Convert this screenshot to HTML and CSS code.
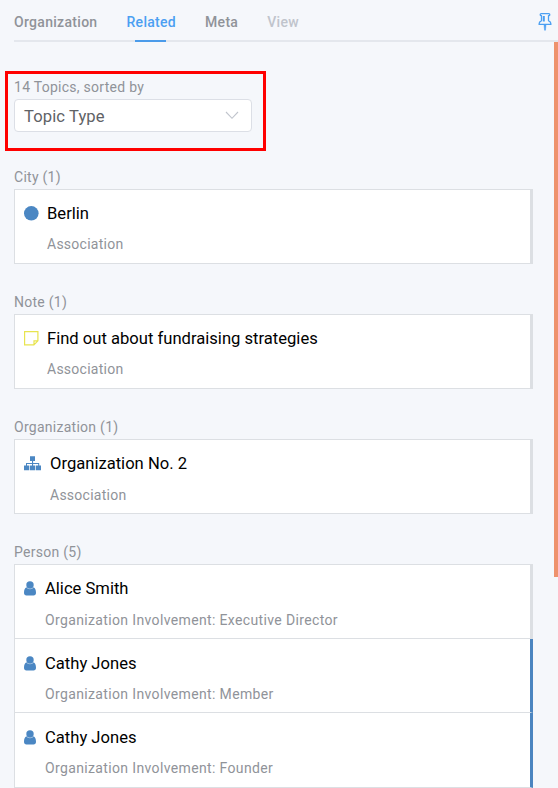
FILE: index.html
```html
<!DOCTYPE html>
<html lang="en">
<head>
<meta charset="utf-8">
<title>Related topics</title>
<link rel="stylesheet" href="styles.css">
</head>
<body>
<svg class="defs" width="0" height="0" aria-hidden="true">
  <symbol id="user" viewBox="0 0 12 15"><circle cx="6" cy="4" r="3.700"/><path d="M2.500 6.300C.8 7 0 9 0 11.800 0 13.600 1 14.500 2.400 14.500h7.200c1.400 0 2.400-.9 2.400-2.700C12 9 11.200 7 9.500 6.300 8.500 7.700 7.200 8.200 6 8.200S3.500 7.700 2.500 6.300z"/></symbol>
</svg>
<header class="header">
  <nav class="tabs">
    <a class="tab">Organization</a>
    <a class="tab active">Related</a>
    <a class="tab">Meta</a>
    <a class="tab disabled">View</a>
  </nav>
  <svg class="pin" width="14" height="20" viewBox="0 0 14 20" fill="none" stroke="#4b9ff2" stroke-width="1.300"><path d="M3.200 1.700h7.600q1 0 1 1t-1 1H10.500v5q2.500 1.300 2.500 3.600H1q0-2.300 2.500-3.600v-5H3.200q-1 0-1-1t1-1z" stroke-linejoin="round"/><path d="M5.800 4v5.500" stroke-width="2"/><path d="M6 12.500h2l-.5 5.700h-1z" fill="#4b9ff2" stroke-width=".5"/></svg>
</header>
<main class="content">
  <section class="sorter">
    <div class="label">14 Topics, sorted by</div>
    <div class="select"><span>Topic Type</span><svg width="14" height="9" viewBox="0 0 14 9" fill="none" stroke="#c0c4cc" stroke-width="1.100"><path d="M1 1l6 6.300L13 1"/></svg></div>
  </section>
  <section class="group">
    <div class="label">City (1)</div>
    <article class="topic">
      <div class="title"><svg class="icon city" width="15" height="15" viewBox="0 0 15 15"><circle cx="7.300" cy="7.300" r="7.300"/></svg>Berlin</div>
      <div class="assoc">Association</div>
    </article>
  </section>
  <section class="group">
    <div class="label">Note (1)</div>
    <article class="topic">
      <div class="title"><svg class="icon note" width="15" height="15" viewBox="0 0 15 15"><path d="M.6.6h13.300v9.200l-4 4H.6zM13.900 9.900h-3.900v3.900"/></svg>Find out about fundraising strategies</div>
      <div class="assoc">Association</div>
    </article>
  </section>
  <section class="group">
    <div class="label">Organization (1)</div>
    <article class="topic org">
      <div class="title"><svg class="icon" width="18" height="15" viewBox="0 0 18 15"><path d="M6 .3h5v4.600H9.100v2h6.100v2.500H17v4.900h-5.200V9.400h2.400V8H9.100v1.400h2v4.900H5.900V9.400H8V8H3v1.400h2.200v4.900H0V9.400h2V6.900h6v-2H6z"/></svg>Organization No. 2</div>
      <div class="assoc">Association</div>
    </article>
  </section>
  <section class="group">
    <div class="label">Person (5)</div>
    <article class="topic person">
      <div class="title"><svg class="icon" width="12" height="15"><use href="#user"/></svg>Alice Smith</div>
      <div class="assoc">Organization Involvement: Executive Director</div>
    </article>
    <article class="topic person marked">
      <div class="title"><svg class="icon" width="12" height="15"><use href="#user"/></svg>Cathy Jones</div>
      <div class="assoc">Organization Involvement: Member</div>
    </article>
    <article class="topic person marked">
      <div class="title"><svg class="icon" width="12" height="15"><use href="#user"/></svg>Cathy Jones</div>
      <div class="assoc">Organization Involvement: Founder</div>
    </article>
  </section>
</main>
<div class="scrollbar"></div>
</body>
</html>
```
FILE: styles.css
```css
* { box-sizing: border-box; }
body {
  margin: 0;
  height: 788px;
  overflow: hidden;
  position: relative;
  background: #f5f7fb;
  color: #000;
  font-family: Roboto, "Liberation Sans", sans-serif;
  font-size: 16.6px;
}
.defs { position: absolute; }
.header {
  height: 42px;
  margin-left: 14px;
  border-bottom: 2px solid #e4e7ed;
  display: flex;
  justify-content: space-between;
  padding-right: 6px;
}
.tabs { display: flex; gap: 29px; }
.tab {
  height: 42px;
  line-height: 44px;
  font-size: 14px;
  font-weight: 500;
  letter-spacing: .3px;
  color: #909399;
  position: relative;
}
.tab.active { color: #4b9ff2; }
.tab.disabled { color: #c0c4cc; }
.tab.active::after {
  content: "";
  position: absolute;
  left: 9px;
  bottom: 0;
  width: 31px;
  height: 2px;
  background: #4b9bea;
}
.pin { margin-top: 12px; }
.content { padding: 29px 25px 0 5px; }
.sorter {
  width: 261px;
  height: 80px;
  border: 3px solid #f00;
  padding: 5px 11px 0 6px;
}
.label {
  height: 20px;
  line-height: 16px;
  font-size: 14px;
  letter-spacing: .27px;
  color: #909399;
}
.select {
  width: 238px;
  height: 33px;
  background: #fff;
  border: 1px solid #dcdfe6;
  border-radius: 4px;
  display: flex;
  align-items: center;
  justify-content: space-between;
  padding: 1px 12px 0 9px;
  color: #606266;
  letter-spacing: .1px;
}
.select svg { margin-bottom: 2px; }
.group { margin: 18px 0 0 9px; }
.group + .group { margin-top: 30px; }
.topic {
  --gap: 8px;
  --icon: 15px;
  height: 75px;
  background: #fff;
  border: 1px solid #dcdfe3;
  border-right-width: 3px;
  padding: 13px 9px 0;
}
.org { --icon: 18px; }
.person { --icon: 12px; --gap: 9px; }
.topic + .topic { height: 74px; border-top: 0; padding-top: 14px; }
.topic + .topic:last-child { height: 75px; }
.marked { border-right-color: #4b85c0; }
.title {
  height: 20px;
  line-height: 22px;
  display: flex;
  gap: var(--gap);
  align-items: flex-start;
  white-space: nowrap;
}
.icon { fill: #4b87c3; flex: none; margin-top: 3px; }
.note { fill: none; stroke: #e8e44f; stroke-width: 1.2; }
.assoc {
  margin: 12px 0 0 calc(var(--icon) + var(--gap));
  line-height: 18px;
  font-size: 14px;
  letter-spacing: .25px;
  color: #909399;
}
.org .assoc, .person .assoc { margin-top: 13px; }
.person .assoc { letter-spacing: .36px; }
.marked .assoc { margin-top: 12px; }
.scrollbar {
  position: absolute;
  top: 42px;
  right: 0;
  width: 4px;
  height: 535px;
  background: #ee926d;
}
```
